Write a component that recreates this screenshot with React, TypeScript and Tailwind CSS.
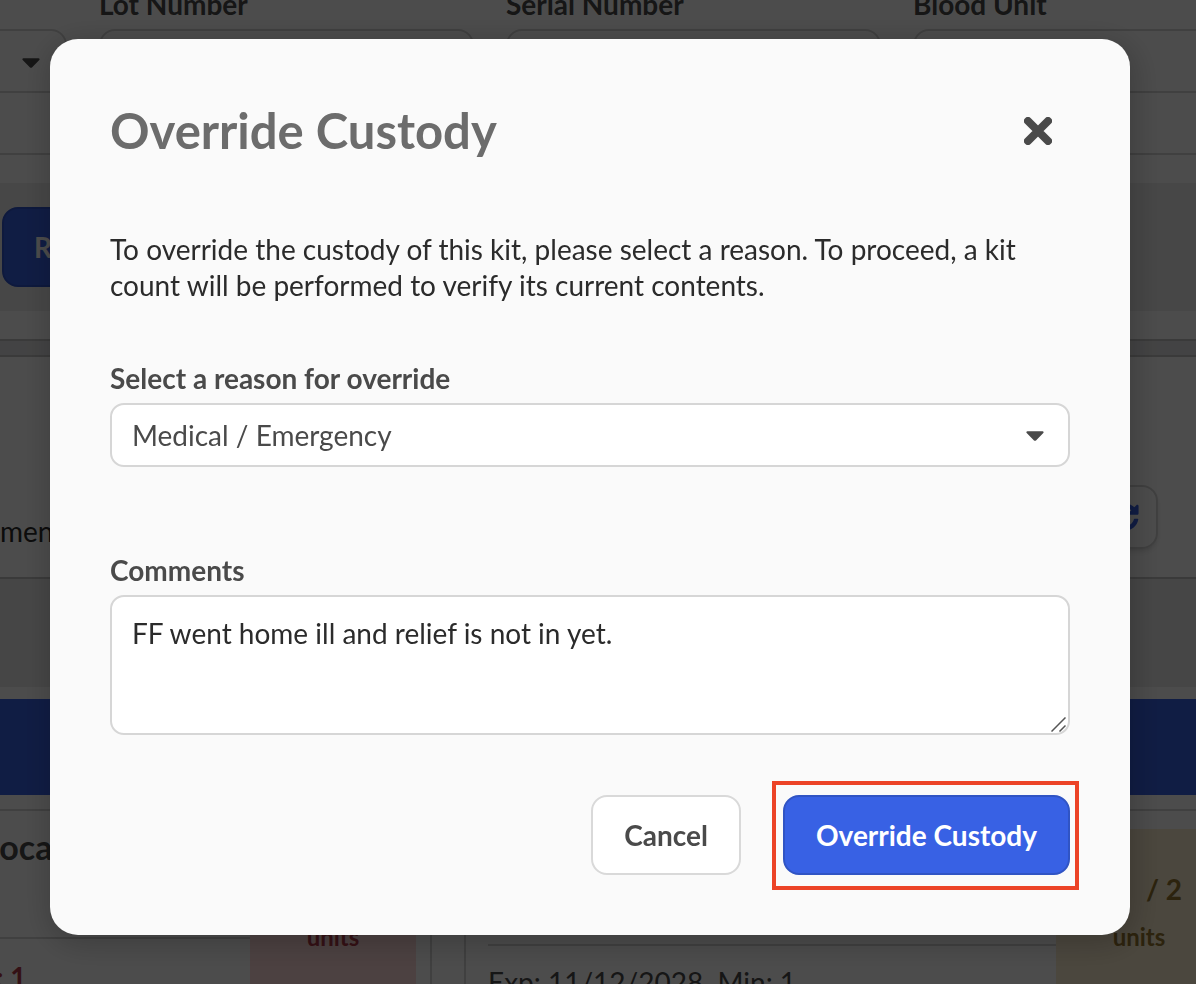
import { useState } from "react";
import type { ReactNode } from "react";
import { FaSyncAlt } from "react-icons/fa";

function Caret({ className }: { className: string }) {
  return (
    <svg className={className} width="18" height="10" viewBox="0 0 18 10" aria-hidden="true">
      <path d="M1.4 0.2h15.2c1 0 1.4 1.1 0.7 1.8L10 9.4c-0.6 0.6-1.4 0.6-2 0L0.7 2C0 1.3 0.4 0.2 1.4 0.2z" fill="currentColor" />
    </svg>
  );
}

function Field({ id, label }: { id: string; label: string }) {
  return (
    <div className="w-[375px] shrink-0">
      <label htmlFor={id} className="-mt-[14px] mb-[7px] block font-bold leading-9">
        {label}
      </label>
      <input id={id} type="text" className="block h-16 w-full rounded-2xl border-2 border-[#d5d5d5] bg-white px-5" />
    </div>
  );
}

function Units({ count, className }: { count: ReactNode; className: string }) {
  return (
    <div className={`flex flex-col items-center pt-[42px] font-bold ${className}`}>
      <span className="text-[28px] leading-9">{count}</span>
      <span className="mt-[14px] text-2xl leading-8">units</span>
    </div>
  );
}

function InventoryPage() {
  return (
    <div className="h-full overflow-hidden bg-white" inert>
      <section className="h-[155px] overflow-hidden border-b-2 border-[#d5d5d5]">
        <div className="flex gap-8">
          <div className="flex w-[67px] shrink-0 pt-[29px]">
            <button type="button" aria-label="Open list" className="flex h-16 w-full items-center rounded-r-2xl border-2 border-l-0 border-[#d5d5d5] pl-[22px] pt-[3px]">
              <Caret className="" />
            </button>
          </div>
          <Field id="lot" label="Lot Number" />
          <Field id="serial" label="Serial Number" />
          <Field id="blood" label="Blood Unit" />
        </div>
      </section>

      <section className="border-b-2 border-[#c4c4c4] py-7">
        <div className="bg-[#eeeeee] px-[2px] py-6">
          <button type="button" className="h-20 rounded-2xl border-2 border-[#2f55cc] bg-[#3861e4] px-[30px] font-bold text-white">
            Reset
          </button>
        </div>
      </section>
      <div className="h-[14px] bg-[#e2e2e4]" />

      <section className="flex h-56 items-end justify-between border-y-2 border-[#c4c4c4] pb-7 pr-[38px]">
        <span className="leading-9 text-[#2b2b2b]">ment</span>
        <button type="button" aria-label="Refresh" className="flex h-16 w-24 items-center justify-end rounded-2xl border-2 border-[#d5d5d5] pr-[17px] text-[#3861e4] shadow-md">
          <FaSyncAlt size={28} />
        </button>
      </section>
      <div className="h-[108px] bg-[#ececec]" />
      <div className="mt-3 h-24 bg-[#3861e4]" />

      <section className="mt-[14px] flex">
        <article className="flex h-[220px] w-[432px] shrink-0 justify-between overflow-hidden border-2 border-l-0 border-[#d5d5d5] pr-[14px]">
          <div className="flex-1">
            <div className="flex h-32 border-b-2 border-[#d5d5d5] pt-[14px]">
              <h2 className="-ml-[67px] text-[34px] font-bold leading-11">Epinocaine</h2>
            </div>
            <p className="-ml-[53px] mt-5 text-[28px] font-bold leading-9 text-[#b03a48]">Min: 1</p>
          </div>
          <Units count="0 / 1" className="mt-[18px] w-[166px] bg-[#fddada] text-[#b03a48]" />
        </article>
        <article className="ml-8 flex h-[220px] flex-1 overflow-hidden border-2 border-r-0 border-[#d5d5d5] pl-[22px]">
          <div className="flex-1">
            <div className="h-[135px] border-b-2 border-[#d5d5d5]" />
            <p className="mt-[18px] whitespace-pre text-[28px] leading-9">Exp: 11/12/2028{"  "}Min: 1</p>
          </div>
          <Units count={<span className="pl-[50px]">/ 2</span>} className="mt-[18px] w-[140px] bg-[#faedcf] pl-[26px] text-[#94752f]" />
        </article>
      </section>
    </div>
  );
}

function OverrideDialog() {
  const [reason, setReason] = useState("medical");
  const [comments, setComments] = useState("FF went home ill and relief is not in yet.");

  return (
    <div
      role="dialog"
      aria-modal="true"
      aria-labelledby="dialog-title"
      className="w-full rounded-[28px] bg-[#fafafa] p-[60px] shadow-[2px_6px_30px_4px_rgba(0,0,0,0.2)]"
    >
      <header className="flex h-16 items-center justify-between pr-[18px]">
        <h1 id="dialog-title" className="pb-[2px] text-[49px] font-bold leading-[62px] text-[#6c6c6c]">
          Override Custody
        </h1>
        <button type="button" aria-label="Close">
          <svg width="28" height="28" viewBox="0 0 28 28" aria-hidden="true">
            <path d="M4 4l20 20M24 4L4 24" stroke="#4a4a4a" strokeWidth="8" strokeLinecap="round" />
          </svg>
        </button>
      </header>

      <p className="mt-[68px] leading-9 text-[#2b2b2b]">
        To override the custody of this kit, please select a reason. To proceed, a kit count will be performed to verify its current contents.
      </p>

      <label htmlFor="reason" className="mt-[57px] block font-bold leading-9">
        Select a reason for override
      </label>
      <div className="relative mt-[7px]">
        <select
          id="reason"
          value={reason}
          onChange={(e) => setReason(e.target.value)}
          className="block h-16 w-full appearance-none rounded-[14px] border-2 border-[#d6d6d6] bg-white px-5 outline-none"
        >
          <option value="medical">Medical / Emergency</option>
          <option value="other">Other</option>
        </select>
        <Caret className="pointer-events-none absolute right-[26px] top-7" />
      </div>

      <label htmlFor="comments" className="mt-[85px] block font-bold leading-9">
        Comments
      </label>
      <div className="relative mt-[7px]">
        <textarea
          id="comments"
          value={comments}
          onChange={(e) => setComments(e.target.value)}
          className="block h-[140px] w-full resize-none rounded-[14px] border-2 border-[#d6d6d6] bg-white px-5 py-[18px] leading-9 text-[#2b2b2b] outline-none"
        />
        <svg className="pointer-events-none absolute bottom-[3px] right-1 text-[#555555]" width="15" height="15" viewBox="0 0 15 15" aria-hidden="true">
          <path d="M0.5 14.5l14-14M8.5 14.5l6-6" stroke="currentColor" strokeWidth="1.5" />
        </svg>
      </div>

      <footer className="mt-[60px] flex justify-end gap-[42px]">
        <button type="button" className="h-20 rounded-2xl border-2 border-[#d9d9d9] bg-white px-[31px] font-bold">
          Cancel
        </button>
        <div className="relative">
          <button type="button" className="block h-20 rounded-2xl border-2 border-[#3054c4] bg-[#3861e4] px-[31px] font-bold text-white">
            Override Custody
          </button>
          <div className="pointer-events-none absolute -bottom-[15px] -left-[11px] -right-[9px] -top-[14px] border-4 border-[#ec4327]" />
        </div>
      </footer>
    </div>
  );
}

export default function App() {
  return (
    <div className="h-screen overflow-hidden font-['Lato',sans-serif] text-[28px] text-[#4a4a4a]">
      <InventoryPage />
      <div className="fixed inset-0 overflow-hidden bg-black/70 pb-[49px] pl-[50px] pr-[66px] pt-[39px]">
        <OverrideDialog />
      </div>
    </div>
  );
}
